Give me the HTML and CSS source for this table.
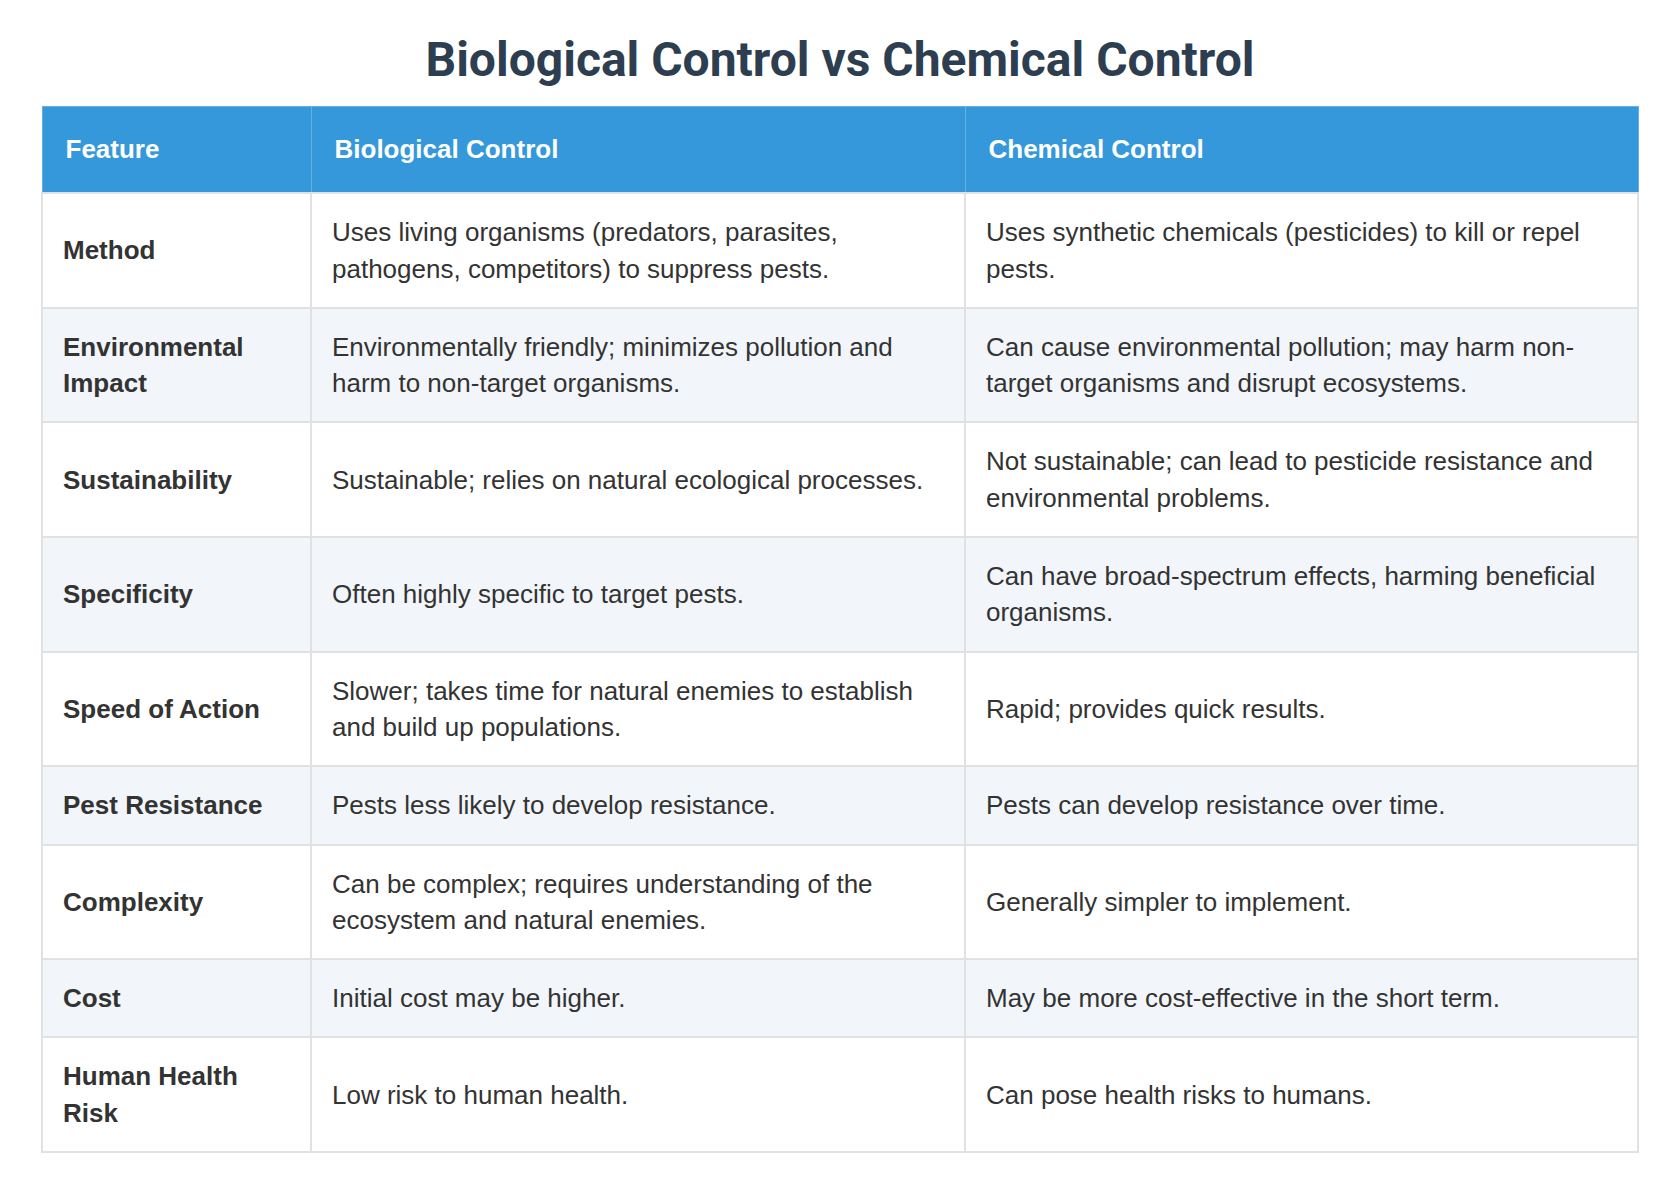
FILE: index.html
```html
<!DOCTYPE html>
<html lang="en">
<head>
<meta charset="utf-8">
<title>Biological Control vs Chemical Control</title>
<link rel="stylesheet" href="styles.css">
</head>
<body>
<div class="page">
  <h1 class="title">Biological Control vs Chemical Control</h1>
  <table class="compare">
    <colgroup>
      <col class="c-feature">
      <col class="c-bio">
      <col class="c-chem">
    </colgroup>
    <thead>
      <tr>
        <th>Feature</th>
        <th>Biological Control</th>
        <th>Chemical Control</th>
      </tr>
    </thead>
    <tbody>
      <tr>
        <td class="feat">Method</td>
        <td>Uses living organisms (predators, parasites, pathogens, competitors) to suppress pests.</td>
        <td>Uses synthetic chemicals (pesticides) to kill or repel pests.</td>
      </tr>
      <tr>
        <td class="feat">Environmental Impact</td>
        <td>Environmentally friendly; minimizes pollution and harm to non-target organisms.</td>
        <td>Can cause environmental pollution; may harm non-target organisms and disrupt ecosystems.</td>
      </tr>
      <tr>
        <td class="feat">Sustainability</td>
        <td>Sustainable; relies on natural ecological processes.</td>
        <td>Not sustainable; can lead to pesticide resistance and environmental problems.</td>
      </tr>
      <tr>
        <td class="feat">Specificity</td>
        <td>Often highly specific to target pests.</td>
        <td>Can have broad-spectrum effects, harming beneficial organisms.</td>
      </tr>
      <tr>
        <td class="feat">Speed of Action</td>
        <td>Slower; takes time for natural enemies to establish and build up populations.</td>
        <td>Rapid; provides quick results.</td>
      </tr>
      <tr>
        <td class="feat">Pest Resistance</td>
        <td>Pests less likely to develop resistance.</td>
        <td>Pests can develop resistance over time.</td>
      </tr>
      <tr>
        <td class="feat">Complexity</td>
        <td>Can be complex; requires understanding of the ecosystem and natural enemies.</td>
        <td>Generally simpler to implement.</td>
      </tr>
      <tr>
        <td class="feat">Cost</td>
        <td>Initial cost may be higher.</td>
        <td>May be more cost-effective in the short term.</td>
      </tr>
      <tr>
        <td class="feat">Human Health Risk</td>
        <td>Low risk to human health.</td>
        <td>Can pose health risks to humans.</td>
      </tr>
    </tbody>
  </table>
</div>
</body>
</html>
```

FILE: styles.css
```css
html, body {
  margin: 0;
  padding: 0;
  background: #ffffff;
}

body {
  font-family: "Liberation Sans", Arial, sans-serif;
  color: #333333;
}

.page {
  padding: 0 41px;
}

.title {
  margin: 32px 0 18px;
  font-family: Roboto, "Liberation Sans", sans-serif;
  font-weight: 700;
  font-size: 48px;
  line-height: 56px;
  color: #2c3e50;
  text-align: center;
}

.compare {
  width: 100%;
  border-collapse: collapse;
  table-layout: fixed;
  font-size: 26px;
  line-height: 36.3px;
}

.c-feature { width: 269px; }
.c-bio { width: 654px; }
.c-chem { width: auto; }

.compare th {
  background: #3498db;
  color: #ffffff;
  font-weight: 700;
  text-align: left;
  padding: 24px 23px 25px;
  border: 1px solid #63b0e4;
}

.compare td {
  padding: 20px 20px;
  border: 2px solid #e1e1e1;
  vertical-align: middle;
  text-align: left;
}

.compare tbody tr:nth-child(even) td {
  background: #f2f6fa;
}

.compare td.feat {
  font-weight: 700;
  color: #333333;
}
```
